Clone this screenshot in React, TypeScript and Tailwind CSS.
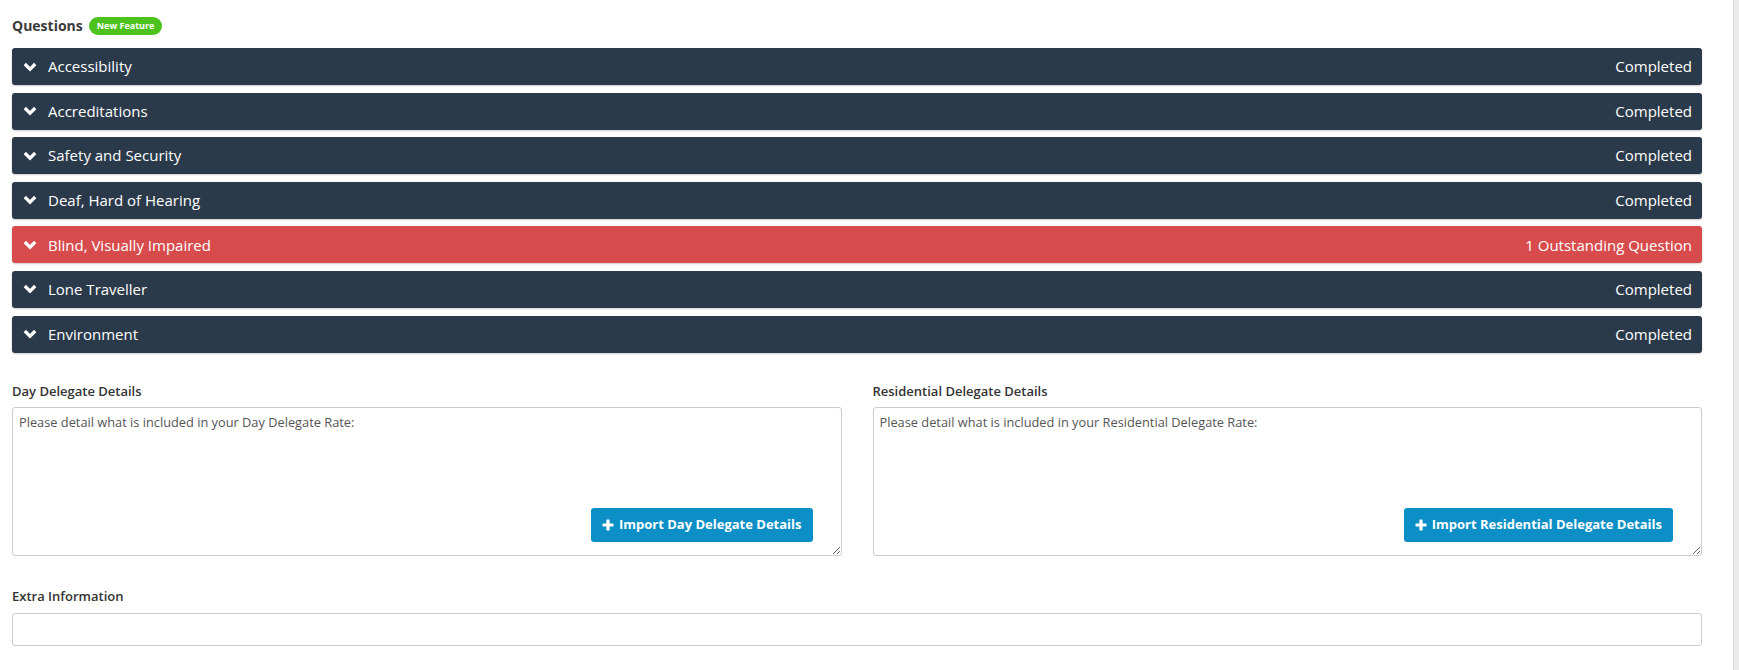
type Section = { title: string; status: string; outstanding?: boolean };

const sections: Section[] = [
  { title: 'Accessibility', status: 'Completed' },
  { title: 'Accreditations', status: 'Completed' },
  { title: 'Safety and Security', status: 'Completed' },
  { title: 'Deaf, Hard of Hearing', status: 'Completed' },
  { title: 'Blind, Visually Impaired', status: '1 Outstanding Question', outstanding: true },
  { title: 'Lone Traveller', status: 'Completed' },
  { title: 'Environment', status: 'Completed' },
];

const font = { fontFamily: '"Open Sans", "Noto Sans", sans-serif' };

function Chevron() {
  return (
    <svg className="w-[14px] h-[10px]" viewBox="0 0 14 10" fill="none" stroke="currentColor" strokeWidth={3.2} strokeLinejoin="miter">
      <polyline points="1.8,2 7,7.2 12.2,2" />
    </svg>
  );
}

function Plus() {
  return (
    <svg className="w-[12px] h-[12px]" viewBox="0 0 12 12" fill="currentColor">
      <rect x="4.4" y="0.5" width="3.2" height="11" rx="0.6" />
      <rect x="0.5" y="4.4" width="11" height="3.2" rx="0.6" />
    </svg>
  );
}

function DelegateBox({ label, text, button }: { label: string; text: string; button: string }) {
  return (
    <div>
      <div className="text-[13px] font-semibold text-[#333] leading-[16px] mb-[8px]">{label}</div>
      <div className="relative">
        <textarea
          defaultValue={text}
          className="block w-full h-[149px] border border-[#ccc] rounded-[3px] px-[6px] py-[5px] text-[12.8px] text-[#555] leading-[18px] resize-y outline-none"
          style={font}
        />
        <button className="absolute right-[29px] bottom-[14px] h-[34px] px-[11px] rounded-[3px] bg-[#0b8fc6] text-white text-[13px] font-bold flex items-center gap-[5px]">
          <Plus />
          {button}
        </button>
      </div>
    </div>
  );
}

export default function App() {
  return (
    <div className="w-[1739px] h-[670px] flex bg-white overflow-hidden" style={font}>
      <main className="flex-1 pl-[12px] pr-[31px] pt-[16px]">
        {/* 标题 */}
        <div className="flex items-center gap-[6px] h-[19px]">
          <span className="text-[14px] font-bold text-[#3a3a3a]">Questions</span>
          <span className="h-[18px] px-[8px] rounded-full bg-[#4dc21d] text-white text-[9px] font-bold flex items-center">New Feature</span>
        </div>

        {/* 问题分组 */}
        <div className="mt-[13px] flex flex-col gap-[7.6px]">
          {sections.map((s) => (
            <div
              key={s.title}
              className={`h-[37px] rounded-[3px] flex items-center justify-between pl-[11px] pr-[10px] text-white text-[15px] shadow-[0_1px_2px_rgba(0,0,0,0.2)] ${s.outstanding ? 'bg-[#d74b4c]' : 'bg-[#2b3a4b]'}`}
            >
              <div className="flex items-center gap-[11px]">
                <Chevron />
                <span>{s.title}</span>
              </div>
              <span>{s.status}</span>
            </div>
          ))}
        </div>

        {/* 代表详情 */}
        <div className="mt-[30px] grid grid-cols-2 gap-x-[31px]">
          <DelegateBox
            label="Day Delegate Details"
            text="Please detail what is included in your Day Delegate Rate:"
            button="Import Day Delegate Details"
          />
          <DelegateBox
            label="Residential Delegate Details"
            text="Please detail what is included in your Residential Delegate Rate:"
            button="Import Residential Delegate Details"
          />
        </div>

        <div className="mt-[32px] text-[13px] font-semibold text-[#333] leading-[16px] mb-[9px]">Extra Information</div>
        <input className="block w-full h-[33px] border border-[#ccc] rounded-[3px] px-[6px] outline-none" />
      </main>
      <div className="w-[6px] bg-[#ebebeb] border-l border-[#dcdcdc]" />
    </div>
  );
}
